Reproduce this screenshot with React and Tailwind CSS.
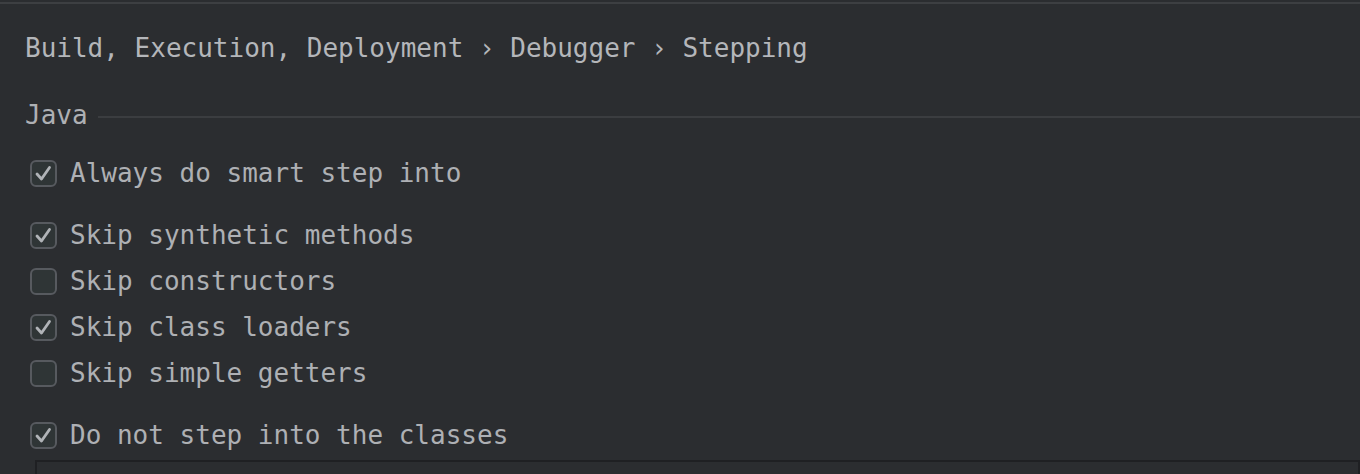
import React from "react";

const groups = [
  [{ label: "Always do smart step into", checked: true }],
  [
    { label: "Skip synthetic methods", checked: true },
    { label: "Skip constructors", checked: false },
    { label: "Skip class loaders", checked: true },
    { label: "Skip simple getters", checked: false },
  ],
  [{ label: "Do not step into the classes", checked: true }],
];

function CheckBox({ checked }) {
  return (
    <div className="w-[27px] h-[27px] rounded-[6px] border-2 border-[#575a5f] bg-[#2f3536] flex items-center justify-center shrink-0">
      {checked && (
        <svg width="23" height="23" viewBox="0 0 23 23" fill="none">
          <path
            d="M5 12 L9.5 17 L17.5 5.5"
            stroke="#b0b3b7"
            strokeWidth="2.8"
            strokeLinecap="round"
            strokeLinejoin="round"
          />
        </svg>
      )}
    </div>
  );
}

export default function App() {
  return (
    <div
      className="w-[1360px] h-[474px] overflow-hidden bg-[#2b2d30] text-[#aeb0b4] text-[26px]"
      style={{ fontFamily: '"DejaVu Sans Mono", monospace' }}
    >
      <div className="pt-[2px]">
        <div className="h-[2px] bg-[#3d3f42]" />
      </div>

      <div className="h-[88px] flex items-center pl-[25px] whitespace-pre text-[#b4b6ba]">
        Build, Execution, Deployment › Debugger › Stepping
      </div>

      <div className="h-[46px] flex items-center pl-[25px]">
        <span className="leading-none">Java</span>
        <div className="flex-1 h-[2px] bg-[#3b3d40] ml-[10px] mt-[4px]" />
      </div>

      <div className="pt-[12px] flex flex-col gap-[16px]">
        {groups.map((group, gi) => (
          <div key={gi} className="flex flex-col">
            {group.map((item) => (
              <div key={item.label} className="h-[46px] flex items-center pl-[30px] gap-[13px]">
                <CheckBox checked={item.checked} />
                <span className="leading-none whitespace-pre">{item.label}</span>
              </div>
            ))}
          </div>
        ))}
      </div>

      <div className="ml-[35px] mt-[2px] h-[40px] border-2 border-[#1f2023] bg-[#2b2d30]" />
    </div>
  );
}
